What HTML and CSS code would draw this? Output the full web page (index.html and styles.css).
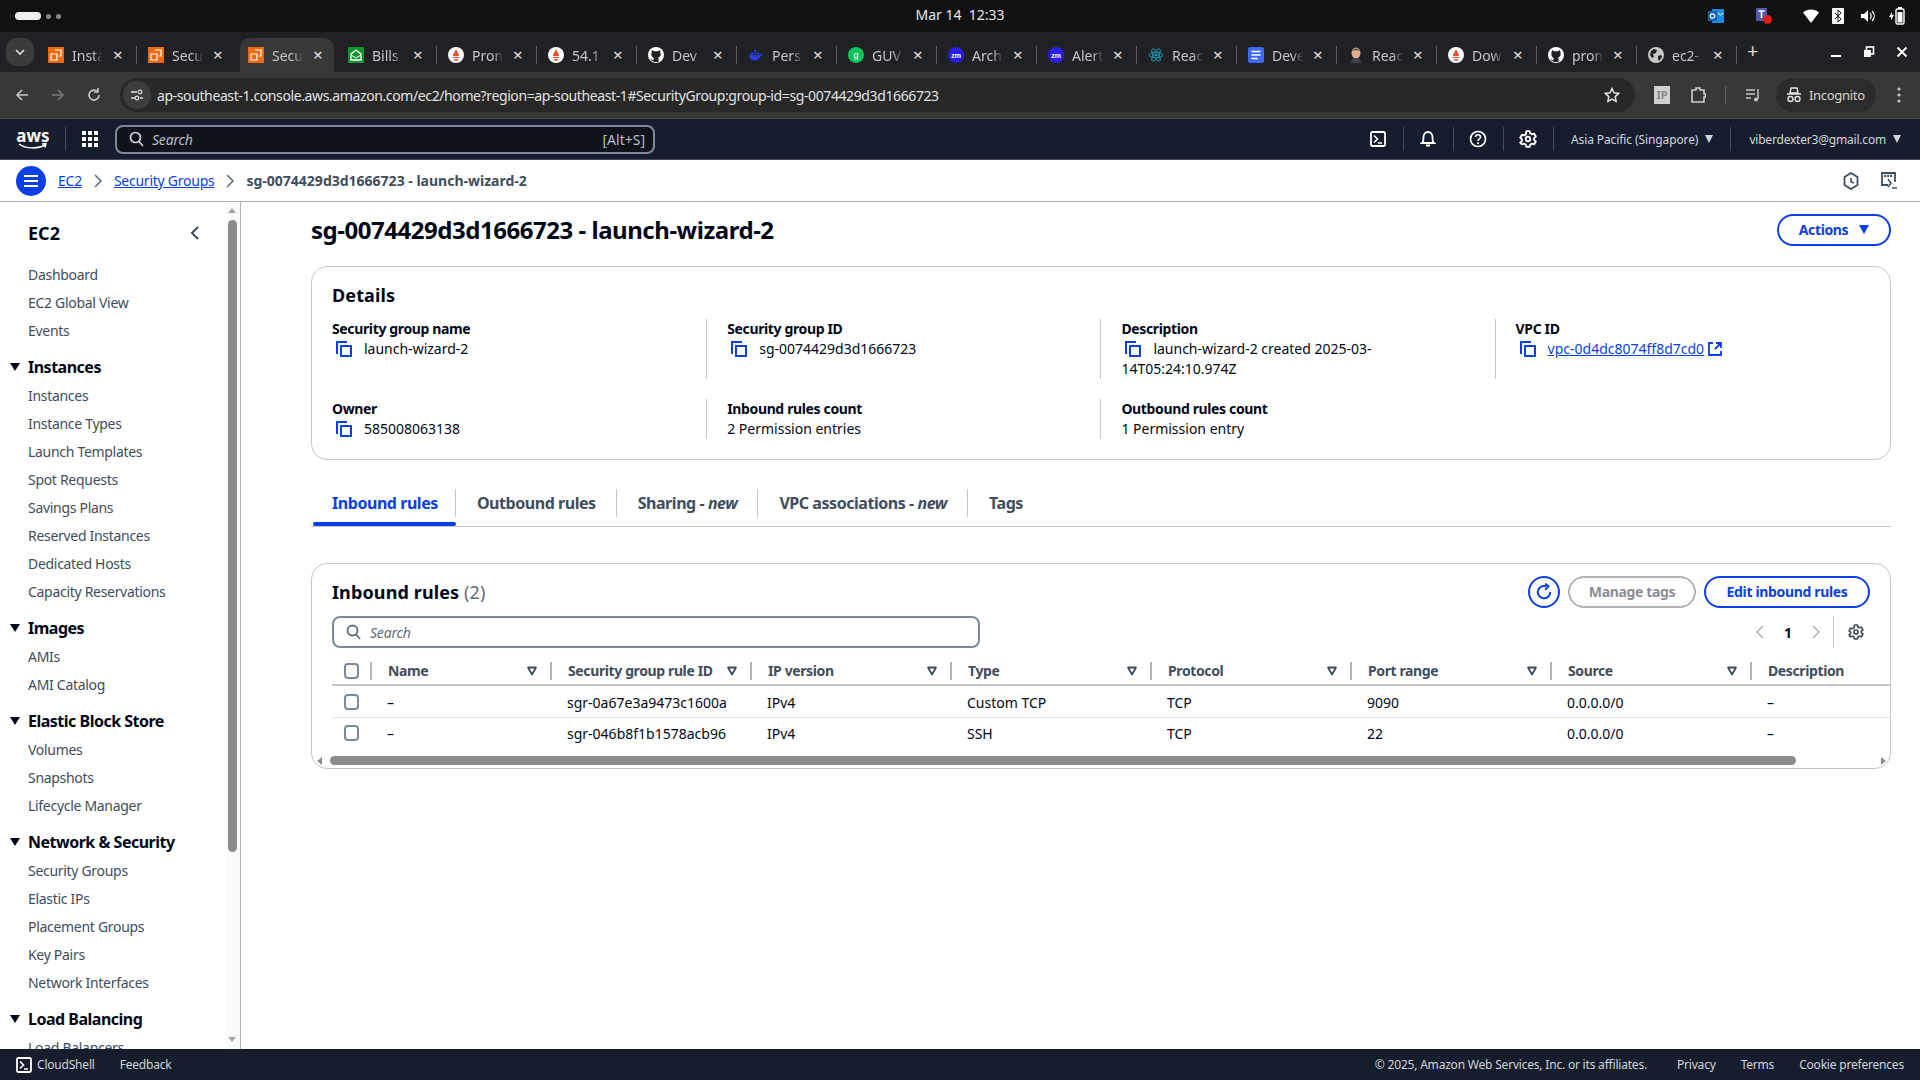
FILE: index.html
```html
<!DOCTYPE html>
<html lang="en">

<head>
    <meta charset="UTF-8">
    <title>sg-0074429d3d1666723 - launch-wizard-2 | EC2</title>
    <link rel="stylesheet" href="styles.css">
</head>

<body>
    <svg class="defs" width="0" height="0">
        <symbol id="i-aws" viewBox="0 0 16 16"><rect width="16" height="16" fill="#f26a0f"/><path d="M7 3h6v6h-2M3 7h6v6H3z" fill="none" stroke="#fff" stroke-width="1.2"/></symbol>
        <symbol id="i-bills" viewBox="0 0 16 16"><rect width="16" height="16" rx="1" fill="#11962e"/><path d="M3 7l5-4 5 4v6H3z" fill="none" stroke="#fff" stroke-width="1.3"/><path d="M3 8l5 3 5-3" fill="none" stroke="#fff"/></symbol>
        <symbol id="i-prom" viewBox="0 0 16 16"><circle cx="8" cy="8" r="8" fill="#fff"/><path d="M8 2c1 3 3 4 3 7H5c0-3 2-4 3-7zM5 10h6v1H5zM6 12h4c0 1-1 2-2 2s-2-1-2-2z" fill="#e6522c"/></symbol>
        <symbol id="i-git" viewBox="0 0 16 16"><circle cx="8" cy="8" r="8" fill="#fff"/><path d="M4 3l2 1.200h4L12 3l.5 3c.8 2.500-.5 4-2.500 4.500.5.500.6 1 .6 1.500v3H5.400v-1.200c-2 .4-2.500-.8-3-1.500 1 0 1.300.8 3 .6 0-.5.1-1 .6-1.400C4 10 2.800 8.500 3.500 6z" fill="#202124"/></symbol>
        <symbol id="i-docker" viewBox="0 0 16 16"><path d="M1 8h11c1 0 1.500-1 1.500-2 .8.400 1.500.8 1.500 1.500-.5.800-1.200 1-2 1-1 3-3.500 5-6.500 5S1.500 11.500 1 8z" fill="#2a3de0"/><path d="M3 5.500h2v2H3zM6 5.500h2v2H6zM9 5.500h2v2H9zM6 2.500h2v2H6z" fill="#2a3de0"/></symbol>
        <symbol id="i-react" viewBox="0 0 16 16"><g fill="none" stroke="#1aa6c4" stroke-width=".8"><ellipse cx="8" cy="8" rx="7" ry="2.800"/><ellipse cx="8" cy="8" rx="7" ry="2.800" transform="rotate(60 8 8)"/><ellipse cx="8" cy="8" rx="7" ry="2.800" transform="rotate(120 8 8)"/></g><circle cx="8" cy="8" r="1.400" fill="#1aa6c4"/></symbol>
        <symbol id="i-docs" viewBox="0 0 16 16"><rect width="16" height="16" rx="2" fill="#3f69f0"/><path d="M3.500 4.500h9M3.500 8h9M3.500 11.500h6" stroke="#fff" stroke-width="1.600"/></symbol>
        <symbol id="i-jenkins" viewBox="0 0 16 16"><ellipse cx="8" cy="6" rx="4.500" ry="5.500" fill="#e0b090"/><path d="M4 4c1-3.500 7-3.500 8 0-2-1-6-1-8 0z" fill="#555"/><path d="M3 16c0-4 2-5 5-5s5 1 5 5z" fill="#39414f"/><path d="M7 12h2l-1 2z" fill="#c33"/></symbol>
        <symbol id="i-globe" viewBox="0 0 16 16"><circle cx="8" cy="8" r="8" fill="#c7c7c7"/><path d="M3 4l3-2 3 1-1 3-3 1 1 3-2 1-2-3zM10 9l3-1 1 2-3 4-1-2z" fill="#202124"/></symbol>
        <symbol id="i-copy" viewBox="0 0 16 16"><path d="M1 13V1h10" fill="none" stroke="#0a3fe6" stroke-width="2"/><rect x="5" y="5" width="10" height="10" fill="none" stroke="#0a3fe6" stroke-width="2"/></symbol>
        <symbol id="i-filter" viewBox="0 0 10 10"><path d="M1 1.500h8L5 8.500z" fill="none" stroke="#414d5c" stroke-width="1.800" stroke-linejoin="round"/></symbol>
        <symbol id="i-gear" viewBox="0 0 16 16"><path d="M6.500 1h3l.4 2 1.500.8 2-.6 1.500 2.600-1.500 1.400v1.600l1.500 1.400-1.500 2.600-2-.6-1.500.8-.4 2h-3l-.4-2-1.500-.8-2 .6L1.100 11.200l1.500-1.400V8.200L1.100 6.800l1.500-2.600 2 .6 1.500-.8z" fill="none" stroke="currentColor" stroke-width="1.700" stroke-linejoin="round"/><circle cx="8" cy="8" r="2" fill="none" stroke="currentColor" stroke-width="1.700"/></symbol>
        <symbol id="i-shell" viewBox="0 0 16 16"><rect x="1" y="1" width="14" height="14" rx="1.500" fill="none" stroke="currentColor" stroke-width="1.800"/><path d="M4 4.500L7.500 8 4 11.500M8 12h4" fill="none" stroke="currentColor" stroke-width="1.600"/></symbol>
    </svg>

    <div class="os-bar">
        <div class="os-dots"><span class="pill"></span><span class="dot"></span><span class="dot"></span></div>
        <div class="os-clock">Mar 14 &nbsp;12:33</div>
        <div class="os-tray">
            <svg class="tray-outlook" width="16" height="16" viewBox="0 0 16 16"><rect x="4" y="1" width="12" height="14" fill="#1d8ce0"/><rect y="3" width="9" height="10" fill="#0f62b5"/><circle cx="4.500" cy="8" r="2.200" fill="none" stroke="#fff" stroke-width="1.200"/><path d="M10 5l2.500 2L15 5" fill="none" stroke="#fff"/></svg>
            <svg class="tray-teams" width="18" height="18" viewBox="0 0 18 18"><rect x="1" y="1" width="11" height="13" rx="1" fill="#5558af"/><path d="M3.500 4h6M6.500 4v7" stroke="#fff" stroke-width="1.600"/><circle cx="12.500" cy="12.500" r="4.500" fill="#e21b1b"/></svg>
            <svg class="tray-wifi" width="16" height="14" viewBox="0 0 16 14"><path d="M0 3.500C4-.5 12-.5 16 3.500L8 14z" fill="#fff"/></svg>
            <svg class="tray-bt" width="12" height="16" viewBox="0 0 12 16"><rect width="12" height="16" rx="1" fill="#fff"/><path d="M3 5l6 6-3 3V2l3 3-6 6" fill="none" stroke="#111" stroke-width="1"/></svg>
            <svg class="tray-vol" width="16" height="14" viewBox="0 0 16 14"><path d="M1 5h3l4-4v12l-4-4H1z" fill="#fff"/><path d="M10 4c1.500 1.500 1.500 4.500 0 6M12 2c3 3 3 7 0 10" fill="none" stroke="#fff" stroke-width="1.200"/></svg>
            <svg class="tray-bat" width="16" height="18" viewBox="0 0 16 18"><path d="M0 10l3-5v3h2l-3 5v-3z" fill="#fff"/><rect x="7" y="2" width="8" height="15" rx="1.500" fill="none" stroke="#fff" stroke-width="1.400"/><rect x="9" y="0" width="4" height="2" fill="#fff"/><rect x="8.500" y="5" width="5" height="10.500" fill="#fff"/></svg>
        </div>
    </div>

    <div class="tab-strip">
        <div class="tab-menu"><svg width="10" height="6" viewBox="0 0 10 6"><path d="M1 1l4 4 4-4" fill="none" stroke="#e3e3e3" stroke-width="1.600"/></svg></div>
        <div class="tab"><svg class="fav"><use href="#i-aws"/></svg><span class="tab-title">Insta</span><span class="tab-x">×</span></div>
        <div class="tab no-sep"><svg class="fav"><use href="#i-aws"/></svg><span class="tab-title">Secu</span><span class="tab-x">×</span></div>
        <div class="tab active"><svg class="fav"><use href="#i-aws"/></svg><span class="tab-title">Secu</span><span class="tab-x">×</span></div>
        <div class="tab"><svg class="fav"><use href="#i-bills"/></svg><span class="tab-title">Bills</span><span class="tab-x">×</span></div>
        <div class="tab"><svg class="fav"><use href="#i-prom"/></svg><span class="tab-title">Prom</span><span class="tab-x">×</span></div>
        <div class="tab"><svg class="fav"><use href="#i-prom"/></svg><span class="tab-title">54.1</span><span class="tab-x">×</span></div>
        <div class="tab"><svg class="fav"><use href="#i-git"/></svg><span class="tab-title">Dev</span><span class="tab-x">×</span></div>
        <div class="tab"><svg class="fav"><use href="#i-docker"/></svg><span class="tab-title">Pers</span><span class="tab-x">×</span></div>
        <div class="tab"><svg class="fav" viewBox="0 0 16 16"><circle cx="8" cy="8" r="8" fill="#12c25a"/><text x="8" y="11" text-anchor="middle" font-size="9" font-family="Liberation Sans" fill="#fff">g</text></svg><span class="tab-title">GUV</span><span class="tab-x">×</span></div>
        <div class="tab"><svg class="fav" viewBox="0 0 16 16"><circle cx="8" cy="8" r="8" fill="#2a1fe0"/><text x="8" y="10.500" text-anchor="middle" font-size="7" font-weight="700" font-family="Liberation Sans" fill="#fff">zm</text></svg><span class="tab-title">Arch</span><span class="tab-x">×</span></div>
        <div class="tab"><svg class="fav" viewBox="0 0 16 16"><circle cx="8" cy="8" r="8" fill="#2a1fe0"/><text x="8" y="10.500" text-anchor="middle" font-size="7" font-weight="700" font-family="Liberation Sans" fill="#fff">zm</text></svg><span class="tab-title">Alert</span><span class="tab-x">×</span></div>
        <div class="tab"><svg class="fav"><use href="#i-react"/></svg><span class="tab-title">Reac</span><span class="tab-x">×</span></div>
        <div class="tab"><svg class="fav"><use href="#i-docs"/></svg><span class="tab-title">Deve</span><span class="tab-x">×</span></div>
        <div class="tab"><svg class="fav"><use href="#i-jenkins"/></svg><span class="tab-title">Reac</span><span class="tab-x">×</span></div>
        <div class="tab"><svg class="fav"><use href="#i-prom"/></svg><span class="tab-title">Dow</span><span class="tab-x">×</span></div>
        <div class="tab"><svg class="fav"><use href="#i-git"/></svg><span class="tab-title">prom</span><span class="tab-x">×</span></div>
        <div class="tab"><svg class="fav"><use href="#i-globe"/></svg><span class="tab-title">ec2-</span><span class="tab-x">×</span></div>
        <div class="tab-plus">+</div>
        <div class="win-btns">
            <svg width="12" height="12" viewBox="0 0 12 12"><path d="M1 10h10" stroke="#fff" stroke-width="2"/></svg>
            <svg width="12" height="12" viewBox="0 0 12 12"><rect x="3.500" y="1" width="7" height="7" fill="none" stroke="#fff" stroke-width="1.600"/><rect x="1" y="4" width="7" height="7" fill="#fff"/></svg>
            <svg width="12" height="12" viewBox="0 0 12 12"><path d="M1.500 1.500l9 9M10.500 1.500l-9 9" stroke="#fff" stroke-width="1.800"/></svg>
        </div>
    </div>

    <div class="toolbar">
        <svg class="tb-back" width="16" height="16" viewBox="0 0 16 16"><path d="M14 8H3M8 3L3 8l5 5" fill="none" stroke="#c7c7c7" stroke-width="1.600"/></svg>
        <svg class="tb-fwd" width="16" height="16" viewBox="0 0 16 16"><path d="M2 8h11M8 3l5 5-5 5" fill="none" stroke="#7a7a7a" stroke-width="1.600"/></svg>
        <svg class="tb-reload" width="16" height="16" viewBox="0 0 16 16"><path d="M13 8a5 5 0 1 1-1.500-3.500M12 1v4H8" fill="none" stroke="#c7c7c7" stroke-width="1.600"/></svg>
        <div class="url-box">
            <span class="site-icon"><svg width="14" height="14" viewBox="0 0 14 14"><path d="M1 4h6M10 10h3M1 10h4" stroke="#e3e3e3" stroke-width="1.300"/><circle cx="10" cy="4" r="1.800" fill="none" stroke="#e3e3e3" stroke-width="1.200"/><circle cx="7" cy="10" r="1.800" fill="none" stroke="#e3e3e3" stroke-width="1.200"/></svg></span>
            <span class="url-text">ap-southeast-1.console.aws.amazon.com/ec2/home?region=ap-southeast-1#SecurityGroup:group-id=sg-0074429d3d1666723</span>
            <svg class="url-star" width="16" height="16" viewBox="0 0 16 16"><path d="M8 1.500l2 4.300 4.700.6-3.500 3.200.9 4.700L8 12l-4.100 2.300.9-4.700L1.300 6.400 6 5.800z" fill="none" stroke="#e3e3e3" stroke-width="1.500"/></svg>
        </div>
        <span class="ip-icon">IP</span>
        <svg class="tb-ext" width="16" height="18" viewBox="0 0 16 18"><path d="M2 4h4V2h4v2h4v4h1.500v3H14v5H2z" fill="none" stroke="#d0d0d0" stroke-width="1.600"/></svg>
        <span class="tb-sep"></span>
        <svg class="tb-music" width="16" height="16" viewBox="0 0 16 16"><path d="M1 3h9M1 7h9M1 11h5" stroke="#c7c7c7" stroke-width="1.500"/><path d="M13 2v10" stroke="#c7c7c7" stroke-width="1.500"/><circle cx="11" cy="12.500" r="2" fill="#c7c7c7"/></svg>
        <div class="incognito">
            <svg width="16" height="16" viewBox="0 0 16 16"><path d="M5 1h6l1 5H4zM1 7h14" fill="none" stroke="#e3e3e3" stroke-width="1.400"/><circle cx="4.500" cy="12" r="2.500" fill="none" stroke="#e3e3e3" stroke-width="1.400"/><circle cx="11.500" cy="12" r="2.500" fill="none" stroke="#e3e3e3" stroke-width="1.400"/></svg>
            <span>Incognito</span>
        </div>
        <svg class="tb-more" width="4" height="16" viewBox="0 0 4 16"><circle cx="2" cy="2" r="1.600" fill="#c7c7c7"/><circle cx="2" cy="8" r="1.600" fill="#c7c7c7"/><circle cx="2" cy="14" r="1.600" fill="#c7c7c7"/></svg>
    </div>

    <div class="aws-nav">
        <div class="aws-logo"><span>aws</span><svg width="30" height="7" viewBox="0 0 30 7"><path d="M1 1c7 5 19 5 26 1M24 1l4-.5-1 4" fill="none" stroke="#fff" stroke-width="1.500"/></svg></div>
        <span class="nav-sep logo-sep"></span>
        <svg class="grid-icon" width="16" height="16" viewBox="0 0 16 16" fill="#fff"><rect width="4" height="4"/><rect x="6" width="4" height="4"/><rect x="12" width="4" height="4"/><rect y="6" width="4" height="4"/><rect x="6" y="6" width="4" height="4"/><rect x="12" y="6" width="4" height="4"/><rect y="12" width="4" height="4"/><rect x="6" y="12" width="4" height="4"/><rect x="12" y="12" width="4" height="4"/></svg>
        <div class="nav-search">
            <svg width="15" height="16" viewBox="0 0 15 16"><circle cx="6.500" cy="6.500" r="5" fill="none" stroke="#d1d5db" stroke-width="1.700"/><path d="M10 10.500l4 4.500" stroke="#d1d5db" stroke-width="1.700"/></svg>
            <span class="nav-search-text">Search</span>
            <span class="nav-search-key">[Alt+S]</span>
        </div>
        <div class="nav-right">
            <span class="nav-ic"><svg width="16" height="18"><use href="#i-shell"/></svg></span>
            <span class="nav-ic"><svg width="16" height="18" viewBox="0 0 16 18"><path d="M2 13c1.500-1 1.500-3 1.500-6S5.500 2 8 2s4.500 2 4.500 5 0 5 1.500 6zM6 15.500h4" fill="none" stroke="#fff" stroke-width="1.800"/></svg></span>
            <span class="nav-ic"><svg width="18" height="18" viewBox="0 0 18 18"><circle cx="9" cy="9" r="7.500" fill="none" stroke="#fff" stroke-width="1.700"/><path d="M6.500 7c0-3 5-3 5 0 0 2-2.500 2-2.500 4" fill="none" stroke="#fff" stroke-width="1.600"/><circle cx="9" cy="13.200" r="1" fill="#fff"/></svg></span>
            <span class="nav-ic"><svg width="18" height="18"><use href="#i-gear"/></svg></span>
            <span class="nav-menu region">Asia Pacific (Singapore) <i class="caret"></i></span>
            <span class="nav-menu user">viberdexter3@gmail.com <i class="caret"></i></span>
        </div>
    </div>

    <div class="crumbs">
        <span class="burger"><svg width="16" height="14" viewBox="0 0 16 14"><path d="M1 2h14M1 7h14M1 12h14" stroke="#fff" stroke-width="2"/></svg></span>
        <a class="crumb-link" href="#">EC2</a>
        <svg class="crumb-chev" width="10" height="14" viewBox="0 0 10 14"><path d="M2 1l6 6-6 6" fill="none" stroke="#5f6b7a" stroke-width="1.500"/></svg>
        <a class="crumb-link" href="#">Security Groups</a>
        <svg class="crumb-chev" width="10" height="14" viewBox="0 0 10 14"><path d="M2 1l6 6-6 6" fill="none" stroke="#5f6b7a" stroke-width="1.500"/></svg>
        <span class="crumb-current">sg-0074429d3d1666723 - launch-wizard-2</span>
        <div class="crumb-tools">
            <svg width="16" height="18" viewBox="0 0 16 18"><path d="M8 1l6.500 4v8L8 17l-6.500-4V5z" fill="none" stroke="#414d5c" stroke-width="1.800"/><path d="M8 6v4l3 1" fill="none" stroke="#414d5c" stroke-width="1.600"/></svg>
            <svg width="18" height="18" viewBox="0 0 18 18"><path d="M8 13H2V1h13v9" fill="none" stroke="#414d5c" stroke-width="1.800"/><path d="M4 4h9" stroke="#414d5c" stroke-width="2" stroke-dasharray="2 1"/><path d="M8 7l3 4-3 4M12 16h5" fill="none" stroke="#414d5c" stroke-width="1.500"/></svg>
        </div>
    </div>

    <div class="main">
        <aside class="sidebar">
            <div class="side-scroll">
                <span class="arrow-up"></span>
                <span class="side-thumb"></span>
                <span class="arrow-down"></span>
            </div>
            <div class="side-head">
                <span>EC2</span>
                <svg width="10" height="14" viewBox="0 0 10 14"><path d="M8 1L2 7l6 6" fill="none" stroke="#414d5c" stroke-width="2"/></svg>
            </div>
            <ul class="side-list">
                <li>Dashboard</li>
                <li>EC2 Global View</li>
                <li>Events</li>
            </ul>
            <div class="side-section"><i class="tri"></i>Instances</div>
            <ul class="side-list">
                <li>Instances</li>
                <li>Instance Types</li>
                <li>Launch Templates</li>
                <li>Spot Requests</li>
                <li>Savings Plans</li>
                <li>Reserved Instances</li>
                <li>Dedicated Hosts</li>
                <li>Capacity Reservations</li>
            </ul>
            <div class="side-section"><i class="tri"></i>Images</div>
            <ul class="side-list">
                <li>AMIs</li>
                <li>AMI Catalog</li>
            </ul>
            <div class="side-section"><i class="tri"></i>Elastic Block Store</div>
            <ul class="side-list">
                <li>Volumes</li>
                <li>Snapshots</li>
                <li>Lifecycle Manager</li>
            </ul>
            <div class="side-section"><i class="tri"></i>Network &amp; Security</div>
            <ul class="side-list">
                <li>Security Groups</li>
                <li>Elastic IPs</li>
                <li>Placement Groups</li>
                <li>Key Pairs</li>
                <li>Network Interfaces</li>
            </ul>
            <div class="side-section"><i class="tri"></i>Load Balancing</div>
            <ul class="side-list">
                <li>Load Balancers</li>
            </ul>
        </aside>

        <main class="content">
            <div class="title-row">
                <h1>sg-0074429d3d1666723 - launch-wizard-2</h1>
                <button class="btn btn-actions">Actions <i class="caret"></i></button>
            </div>

            <section class="card details">
                <h2>Details</h2>
                <div class="detail-row first">
                    <div class="cell">
                        <div class="label">Security group name</div>
                        <div class="value"><svg class="copy"><use href="#i-copy"/></svg>launch-wizard-2</div>
                    </div>
                    <div class="cell">
                        <div class="label">Security group ID</div>
                        <div class="value"><svg class="copy"><use href="#i-copy"/></svg>sg-0074429d3d1666723</div>
                    </div>
                    <div class="cell">
                        <div class="label">Description</div>
                        <div class="value"><svg class="copy"><use href="#i-copy"/></svg>launch-wizard-2 created 2025-03-<br>14T05:24:10.974Z</div>
                    </div>
                    <div class="cell">
                        <div class="label">VPC ID</div>
                        <div class="value"><svg class="copy"><use href="#i-copy"/></svg><a class="vpc-link" href="#">vpc-0d4dc8074ff8d7cd0</a>
                            <svg class="ext-link" width="14" height="14" viewBox="0 0 14 14"><path d="M5 1H1v12h12V9M8 1h5v5M13 1L7 7" fill="none" stroke="#0a3fe6" stroke-width="1.800"/></svg></div>
                    </div>
                </div>
                <div class="detail-row">
                    <div class="cell">
                        <div class="label">Owner</div>
                        <div class="value"><svg class="copy"><use href="#i-copy"/></svg>585008063138</div>
                    </div>
                    <div class="cell">
                        <div class="label">Inbound rules count</div>
                        <div class="value">2 Permission entries</div>
                    </div>
                    <div class="cell">
                        <div class="label">Outbound rules count</div>
                        <div class="value">1 Permission entry</div>
                    </div>
                    <div class="cell"></div>
                </div>
            </section>

            <div class="tabs">
                <div class="tabs-item current"><span>Inbound rules</span></div>
                <div class="tabs-item"><span>Outbound rules</span></div>
                <div class="tabs-item"><span>Sharing - <em>new</em></span></div>
                <div class="tabs-item"><span>VPC associations - <em>new</em></span></div>
                <div class="tabs-item last"><span>Tags</span></div>
            </div>

            <section class="card rules">
                <div class="rules-head">
                    <h2>Inbound rules <span class="count">(2)</span></h2>
                    <div class="rules-btns">
                        <button class="btn-refresh"><svg width="18" height="18" viewBox="0 0 16 16"><path d="M13.500 8A5.500 5.500 0 1 1 10 3M9 .5L12 3 9 6" fill="none" stroke="#0a3fe6" stroke-width="1.800"/></svg></button>
                        <button class="btn btn-off">Manage tags</button>
                        <button class="btn btn-edit">Edit inbound rules</button>
                    </div>
                </div>
                <div class="rules-tools">
                    <div class="rules-search">
                        <svg width="15" height="16" viewBox="0 0 15 16"><circle cx="6.500" cy="6.500" r="5" fill="none" stroke="#5f6b7a" stroke-width="1.800"/><path d="M10 10.500l4 4.500" stroke="#5f6b7a" stroke-width="1.800"/></svg>
                        <input type="text" placeholder="Search">
                    </div>
                    <div class="pager">
                        <svg width="10" height="14" viewBox="0 0 10 14"><path d="M8 1L2 7l6 6" fill="none" stroke="#b4b4bb" stroke-width="1.600"/></svg>
                        <span class="page-num">1</span>
                        <svg width="10" height="14" viewBox="0 0 10 14"><path d="M2 1l6 6-6 6" fill="none" stroke="#b4b4bb" stroke-width="1.600"/></svg>
                        <span class="pager-sep"></span>
                        <svg class="pager-gear" width="16" height="16"><use href="#i-gear"/></svg>
                    </div>
                </div>
                <div class="table">
                    <div class="tr th">
                        <div class="c-check"><input type="checkbox"></div>
                        <div class="c-name">Name<svg class="flt"><use href="#i-filter"/></svg></div>
                        <div class="c-col">Security group rule ID<svg class="flt"><use href="#i-filter"/></svg></div>
                        <div class="c-col">IP version<svg class="flt"><use href="#i-filter"/></svg></div>
                        <div class="c-col">Type<svg class="flt"><use href="#i-filter"/></svg></div>
                        <div class="c-col">Protocol<svg class="flt"><use href="#i-filter"/></svg></div>
                        <div class="c-col">Port range<svg class="flt"><use href="#i-filter"/></svg></div>
                        <div class="c-col">Source<svg class="flt"><use href="#i-filter"/></svg></div>
                        <div class="c-col">Description</div>
                    </div>
                    <div class="tr">
                        <div class="c-check"><input type="checkbox"></div>
                        <div class="c-name">–</div>
                        <div class="c-col">sgr-0a67e3a9473c1600a</div>
                        <div class="c-col">IPv4</div>
                        <div class="c-col">Custom TCP</div>
                        <div class="c-col">TCP</div>
                        <div class="c-col">9090</div>
                        <div class="c-col">0.0.0.0/0</div>
                        <div class="c-col">–</div>
                    </div>
                    <div class="tr">
                        <div class="c-check"><input type="checkbox"></div>
                        <div class="c-name">–</div>
                        <div class="c-col">sgr-046b8f1b1578acb96</div>
                        <div class="c-col">IPv4</div>
                        <div class="c-col">SSH</div>
                        <div class="c-col">TCP</div>
                        <div class="c-col">22</div>
                        <div class="c-col">0.0.0.0/0</div>
                        <div class="c-col">–</div>
                    </div>
                </div>
                <div class="h-scroll">
                    <span class="arrow-left"></span>
                    <span class="h-thumb"></span>
                    <span class="arrow-right"></span>
                </div>
            </section>
        </main>
    </div>

    <footer class="footer">
        <svg width="16" height="16"><use href="#i-shell"/></svg>
        <span class="foot-shell">CloudShell</span>
        <span class="foot-feedback">Feedback</span>
        <span class="foot-copy">© 2025, Amazon Web Services, Inc. or its affiliates.</span>
        <span class="foot-link">Privacy</span>
        <span class="foot-link">Terms</span>
        <span class="foot-link">Cookie preferences</span>
    </footer>
</body>

</html>
```

FILE: styles.css
```css
* {
    box-sizing: border-box;
}

html,
body {
    height: 100%;
}

body {
    margin: 0;
    display: flex;
    flex-direction: column;
    overflow: hidden;
    background: #fff;
    color: #000716;
    font-family: "Noto Sans", "Open Sans", sans-serif;
    font-size: 14px;
}

.defs {
    position: absolute;
}

button {
    font-family: inherit;
}

/* desktop bar */
.os-bar {
    height: 32px;
    flex: none;
    display: flex;
    align-items: center;
    position: relative;
    background: #111;
    color: #e8e8e8;
}

.os-dots {
    display: flex;
    align-items: center;
    gap: 5px;
    margin-left: 15px;
}

.pill {
    width: 26px;
    height: 8px;
    border-radius: 4px;
    background: #eee;
}

.dot {
    width: 5px;
    height: 5px;
    border-radius: 50%;
    background: #8a8a8a;
}

.os-clock {
    position: absolute;
    left: 0;
    right: 0;
    top: 5px;
    text-align: center;
    font-size: 14px;
    line-height: 19px;
}

.os-tray {
    margin-left: auto;
    display: flex;
    align-items: center;
    margin-right: 15px;
}

.tray-teams {
    margin-left: 31px;
}

.tray-wifi {
    margin-left: 30px;
}

.tray-bt {
    margin-left: 13px;
}

.tray-vol {
    margin-left: 16px;
}

.tray-bat {
    margin-left: 13px;
}

/* browser tabs */
.tab-strip {
    height: 40px;
    flex: none;
    display: flex;
    background: #202124;
    color: #c7c7c7;
    font-size: 14px;
}

.tab-menu {
    width: 28px;
    height: 28px;
    margin: 6px 6px 0;
    border-radius: 10px;
    background: #3a3b3d;
    display: flex;
    align-items: center;
    justify-content: center;
}

.tab {
    width: 100px;
    height: 34px;
    margin-top: 6px;
    padding-left: 8px;
    display: flex;
    align-items: center;
    position: relative;
}

.tab::after {
    content: "";
    position: absolute;
    right: 3px;
    top: 8px;
    height: 18px;
    width: 1px;
    background: #5f6063;
}

.tab.no-sep::after,
.tab.active::after {
    display: none;
}

.tab.active {
    width: 94px;
    margin-right: 6px;
    background: #383838;
    border-radius: 10px 10px 0 0;
}

.fav {
    width: 16px;
    height: 16px;
    flex: none;
}

.tab-title {
    width: 34px;
    margin-left: 8px;
    white-space: nowrap;
    -webkit-mask-image: linear-gradient(90deg, #000 60%, transparent 92%);
    mask-image: linear-gradient(90deg, #000 60%, transparent 92%);
}

.tab-x {
    margin-left: 7px;
    color: #e3e3e3;
    font-size: 17px;
    line-height: 20px;
}

.tab-plus {
    margin: 4px 0 0 7px;
    font-size: 20px;
    line-height: 30px;
    color: #d8d8d8;
}

.win-btns {
    margin-left: auto;
    margin-right: 12px;
    display: flex;
    align-items: center;
    gap: 21px;
}

/* address bar */
.toolbar {
    height: 47px;
    flex: none;
    display: flex;
    align-items: center;
    background: #383838;
    border-bottom: 1px solid #4a4a4a;
    padding-left: 14px;
}

.tb-fwd,
.tb-reload {
    margin-left: 20px;
}

.url-box {
    width: 1515px;
    height: 34px;
    margin-left: 18px;
    padding-left: 3px;
    border-radius: 17px;
    background: #282828;
    display: flex;
    align-items: center;
    color: #e3e3e3;
}

.site-icon {
    width: 28px;
    height: 28px;
    border-radius: 50%;
    background: #3d3d3d;
    display: flex;
    align-items: center;
    justify-content: center;
}

.url-text {
    margin-left: 6px;
    font-size: 14px;
    letter-spacing: -0.39px;
    white-space: nowrap;
}

.url-star {
    margin-left: auto;
    margin-right: 15px;
}

.ip-icon {
    width: 16px;
    height: 18px;
    margin-left: 19px;
    background: #d0d0d0;
    color: #888;
    font-size: 11px;
    font-weight: 700;
    line-height: 18px;
    text-align: center;
}

.tb-ext {
    margin-left: 20px;
}

.tb-sep {
    width: 1px;
    height: 18px;
    margin-left: 19px;
    background: #5f6063;
}

.tb-music {
    margin-left: 19px;
}

.incognito {
    width: 100px;
    height: 34px;
    margin-left: 15px;
    padding-left: 10px;
    border-radius: 17px;
    background: #2c2c2c;
    color: #d8d8d8;
    display: flex;
    align-items: center;
    gap: 7px;
    font-size: 13px;
    letter-spacing: -0.3px;
}

.tb-more {
    margin-left: 21px;
}

/* aws console header */
.aws-nav {
    height: 41px;
    flex: none;
    display: flex;
    align-items: center;
    background: #161e2d;
    border-bottom: 1px solid #414d5c;
    color: #fff;
}

.aws-logo {
    width: 32px;
    margin-left: 17px;
    display: flex;
    flex-direction: column;
    align-items: center;
}

.aws-logo span {
    font-size: 17px;
    font-weight: 700;
    line-height: 15px;
}

.nav-sep {
    width: 1px;
    height: 24px;
    background: #414d5c;
}

.logo-sep {
    margin-left: 16px;
}

.grid-icon {
    margin-left: 16px;
}

.nav-search {
    width: 540px;
    height: 29px;
    margin-left: 17px;
    padding: 0 6px 0 12px;
    display: flex;
    align-items: center;
    background: #0f141a;
    border: 2px solid #7d8998;
    border-radius: 8px;
    font-size: 14px;
    letter-spacing: -0.2px;
    color: #b6bec9;
}

.nav-search-text {
    margin-left: 8px;
    font-style: italic;
}

.nav-search-key {
    margin-left: auto;
    margin-right: 2px;
    letter-spacing: 0;
}

.nav-right {
    margin-left: auto;
    display: flex;
    align-items: center;
    height: 100%;
}

.nav-ic {
    width: 50px;
    height: 24px;
    border-right: 1px solid #414d5c;
    display: flex;
    align-items: center;
    justify-content: center;
}

.nav-menu {
    display: flex;
    align-items: center;
    gap: 7px;
    height: 24px;
    font-size: 12px;
    white-space: nowrap;
    color: #d1d5db;
}

.region {
    padding: 0 17px;
    border-right: 1px solid #414d5c;
    letter-spacing: -0.1px;
}

.user {
    padding: 0 19px 0 18px;
    letter-spacing: -0.2px;
}

.caret {
    width: 0;
    height: 0;
    border-left: 4px solid transparent;
    border-right: 4px solid transparent;
    border-top: 8px solid currentColor;
}

/* breadcrumbs */
.crumbs {
    height: 42px;
    flex: none;
    display: flex;
    align-items: center;
    padding-left: 16px;
    border-bottom: 1px solid #b4b4bb;
}

.burger {
    width: 30px;
    height: 30px;
    border-radius: 50%;
    background: #0a3fe6;
    display: flex;
    align-items: center;
    justify-content: center;
}

.crumb-link {
    color: #0a3fe6;
    font-size: 14px;
    letter-spacing: -0.25px;
}

.crumbs .crumb-link:first-of-type {
    margin-left: 12px;
}

.crumb-chev {
    margin: 0 11px;
}

.crumb-current {
    color: #414d5c;
    font-size: 14px;
    font-weight: 700;
}

.crumb-tools {
    margin-left: auto;
    margin-right: 22px;
    display: flex;
    align-items: center;
    gap: 21px;
}

/* page */
.main {
    flex: 1;
    min-height: 0;
    display: flex;
}

.sidebar {
    width: 241px;
    flex: none;
    position: relative;
    overflow: hidden;
    border-right: 1px solid #b4b4bb;
}

.side-scroll {
    position: absolute;
    right: 0;
    top: 0;
    bottom: 0;
    width: 15px;
    background: #fafafa;
}

.side-thumb {
    position: absolute;
    left: 3px;
    top: 18px;
    width: 9px;
    height: 632px;
    border-radius: 5px;
    background: #8c8c8c;
}

.arrow-up,
.arrow-down {
    position: absolute;
    left: 3px;
    width: 0;
    height: 0;
    border-left: 4.5px solid transparent;
    border-right: 4.5px solid transparent;
}

.arrow-up {
    top: 6px;
    border-bottom: 5px solid #a3a3a3;
}

.arrow-down {
    bottom: 7px;
    border-top: 5px solid #a3a3a3;
}

.side-head {
    height: 34px;
    margin: 14px 0 11px 28px;
    width: 172px;
    display: flex;
    align-items: center;
    justify-content: space-between;
    font-size: 18px;
    font-weight: 700;
}

.side-list {
    list-style: none;
    margin: 0;
    padding: 0 0 0 28px;
}

.side-list li {
    height: 28px;
    line-height: 28px;
    color: #414d5c;
    font-size: 14px;
    letter-spacing: -0.3px;
    white-space: nowrap;
}

.side-section {
    height: 30px;
    margin-top: 7px;
    padding-left: 10px;
    display: flex;
    align-items: center;
    gap: 8px;
    font-size: 16px;
    font-weight: 700;
    letter-spacing: -0.5px;
    white-space: nowrap;
}

.tri {
    width: 0;
    height: 0;
    border-left: 5px solid transparent;
    border-right: 5px solid transparent;
    border-top: 8px solid #000716;
}

.content {
    flex: 1;
    min-width: 0;
    padding: 12px 29px 0 70px;
}

.title-row {
    height: 32px;
    margin-bottom: 20px;
    display: flex;
    align-items: center;
    justify-content: space-between;
}

h1 {
    margin: 0;
    font-size: 24px;
    font-weight: 700;
    line-height: 32px;
    letter-spacing: -0.47px;
}

h2 {
    margin: 0;
    font-size: 18px;
    font-weight: 700;
    line-height: 24px;
    letter-spacing: 0.12px;
}

.btn {
    height: 32px;
    padding: 0 0 2px;
    border-radius: 16px;
    border: 2px solid #0a3fe6;
    background: #fff;
    color: #0a3fe6;
    font-size: 14px;
    font-weight: 700;
    letter-spacing: -0.35px;
    white-space: nowrap;
}

.btn-actions {
    width: 114px;
    display: flex;
    align-items: center;
    justify-content: center;
    gap: 11px;
}

.btn-actions .caret {
    border-left-width: 5px;
    border-right-width: 5px;
    border-top-width: 9px;
}

.card {
    border: 1px solid #c6c6cd;
    border-radius: 16px;
    background: #fff;
}

/* details */
.details {
    height: 194px;
    padding-top: 16px;
}

.details h2 {
    margin: 0 0 12px 20px;
}

.detail-row {
    display: grid;
    grid-template-columns: repeat(4, 394.2px);
    height: 40px;
}

.detail-row.first {
    height: 60px;
    margin-bottom: 20px;
}

.cell {
    padding-left: 20px;
    border-left: 1px solid #c6c6cd;
}

.cell:first-child {
    padding-left: 20px;
    border-left: none;
}

.detail-row .cell:last-child:empty {
    border-left: none;
}

.label {
    font-weight: 700;
    font-size: 14px;
    line-height: 20px;
    letter-spacing: -0.36px;
}

.value {
    font-size: 14px;
    line-height: 20px;
    color: #000716;
}

.copy {
    width: 16px;
    height: 16px;
    margin: 0 12px 0 4px;
    vertical-align: -3px;
}

.vpc-link {
    color: #0a3fe6;
}

.ext-link {
    vertical-align: -2px;
}

/* tabs */
.tabs {
    height: 38px;
    margin-top: 29px;
    padding-left: 2px;
    display: flex;
    border-bottom: 1px solid #c6c6cd;
}

.tabs-item {
    height: 37px;
    position: relative;
    color: #414d5c;
    font-size: 16px;
    font-weight: 700;
    letter-spacing: -0.45px;
}

.tabs-item span {
    display: block;
    height: 28px;
    line-height: 28px;
    padding: 0 20px 0 21px;
    border-right: 1px solid #c6c6cd;
    white-space: nowrap;
}

.tabs-item:first-child span {
    padding: 0 17px 0 19px;
}

.tabs-item.last span {
    border-right: none;
}

.tabs-item em {
    font-weight: 700;
}

.tabs-item.current {
    color: #0a3fe6;
}

.tabs-item.current::after {
    content: "";
    position: absolute;
    left: 0;
    right: 0;
    bottom: 0;
    height: 4px;
    border-radius: 2px;
    background: #0a3fe6;
}

/* inbound rules card */
.rules {
    height: 206px;
    margin-top: 36px;
    padding: 12px 0 0 20px;
    overflow: hidden;
}

.rules-head {
    height: 32px;
    margin: 0 20px 8px 0;
    display: flex;
    align-items: center;
    justify-content: space-between;
}

.count {
    font-weight: 400;
    color: #5f6b7a;
}

.rules-btns {
    display: flex;
    align-items: center;
    gap: 8px;
}

.btn-refresh {
    width: 32px;
    height: 32px;
    border-radius: 50%;
    border: 2px solid #0a3fe6;
    background: #fff;
    padding: 0;
    display: flex;
    align-items: center;
    justify-content: center;
}

.btn-off {
    width: 128px;
    border-color: #b4b4bb;
    color: #8c8c94;
}

.btn-edit {
    width: 166px;
}

.rules-tools {
    height: 32px;
    margin-right: 20px;
    display: flex;
    align-items: center;
    justify-content: space-between;
}

.rules-search {
    width: 648px;
    height: 32px;
    padding-left: 12px;
    display: flex;
    align-items: center;
    gap: 9px;
    border: 2px solid #7d8998;
    border-radius: 8px;
}

.rules-search input {
    flex: 1;
    border: none;
    outline: none;
    padding: 0;
    font-family: inherit;
    font-size: 14px;
    font-style: italic;
    letter-spacing: -0.2px;
}

.rules-search input::placeholder {
    color: #5f6b7a;
}

.pager {
    height: 32px;
    display: flex;
    align-items: center;
    color: #000716;
}

.page-num {
    width: 46px;
    text-align: center;
    font-weight: 700;
    font-size: 14px;
}

.pager-sep {
    width: 1px;
    height: 32px;
    margin: 0 14px 0 12px;
    background: #c6c6cd;
}

.pager-gear {
    margin-right: 6px;
    color: #414d5c;
}

.table {
    width: 1558px;
    overflow: hidden;
}

.tr {
    width: 1558px;
    height: 32px;
    padding-top: 1px;
    display: grid;
    grid-template-columns: 38px 180px repeat(6, 200px) 140px;
    align-items: center;
    border-bottom: 1px solid #e4e4e8;
    font-size: 14px;
    white-space: nowrap;
}

.tr:last-child {
    padding: 0 0 2px;
    border-bottom: none;
}

.tr.th {
    height: 38px;
    padding-top: 10px;
    border-bottom: 2px solid #c6c6cd;
    color: #414d5c;
    font-weight: 700;
    letter-spacing: -0.38px;
}

.tr input {
    appearance: none;
    display: block;
    width: 15px;
    height: 16px;
    margin: 0 0 0 12px;
    border: 2px solid #7d8998;
    border-radius: 4px;
    background: #fff;
}

.c-name {
    padding-left: 17px;
}

.c-col {
    padding-left: 17px;
}

.th .c-name,
.th .c-col {
    height: 18px;
    line-height: 18px;
    padding-left: 16px;
    border-left: 2px solid #b4b4bb;
    position: relative;
}

.flt {
    position: absolute;
    right: 13px;
    top: 4px;
    width: 10px;
    height: 10px;
}

.h-scroll {
    height: 18px;
    margin-left: -20px;
    padding: 3px 4px 0 5px;
    display: flex;
    align-items: center;
}

.h-thumb {
    width: 1466px;
    height: 9px;
    margin-left: 8px;
    border-radius: 5px;
    background: #8c8c8c;
}

.arrow-left,
.arrow-right {
    width: 0;
    height: 0;
    border-top: 4.5px solid transparent;
    border-bottom: 4.5px solid transparent;
}

.arrow-left {
    border-right: 5px solid #8c8c8c;
}

.arrow-right {
    margin-left: auto;
    border-left: 5px solid #8c8c8c;
}

/* console footer */
.footer {
    height: 31px;
    flex: none;
    display: flex;
    align-items: center;
    padding: 0 16px;
    background: #161e2d;
    color: #d1d5db;
    font-size: 12px;
    letter-spacing: -0.2px;
    white-space: nowrap;
}

.footer svg {
    color: #fff;
}

.foot-shell {
    margin-left: 5px;
}

.foot-feedback {
    margin-left: 25px;
}

.foot-copy {
    margin-left: auto;
    margin-right: 30px;
}

.foot-link {
    margin-right: 25px;
}

.foot-link:last-child {
    margin-right: 0;
}
```
